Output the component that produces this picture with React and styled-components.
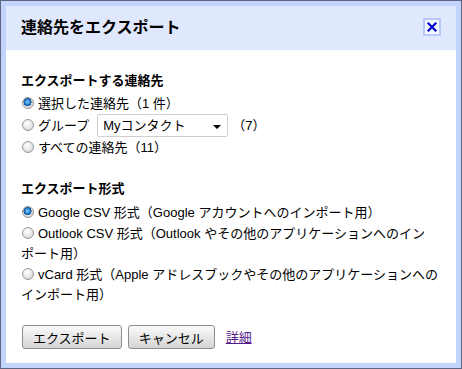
import React from 'react'
import styled, { createGlobalStyle } from 'styled-components'

const Global = createGlobalStyle`
    html, body {
        margin: 0;
        padding: 0;
        background: #ffffff;
    }
    body {
        font-family: "Liberation Sans", "Noto Sans CJK JP", sans-serif;
        color: #000;
    }
`;

const exportTargets = [
    { id: 'selected', label: '選択した連絡先（1 件）', checked: true },
    { id: 'group', label: 'グループ', group: true },
    { id: 'all', label: 'すべての連絡先（11）' },
]

const formats = [
    { id: 'google', lines: ['Google CSV 形式（Google アカウントへのインポート用）'], checked: true },
    { id: 'outlook', lines: ['Outlook CSV 形式（Outlook やその他のアプリケーションへのイン', 'ポート用）'] },
    { id: 'vcard', lines: ['vCard 形式（Apple アドレスブックやその他のアプリケーションへの', 'インポート用）'] },
]

const App = () => {
    return (
        <>
            <Global />
            <Frame>
                <Dialog>
                    <Header>
                        <Title>連絡先をエクスポート</Title>
                        <Close aria-label="閉じる">
                            <svg width="10" height="10" viewBox="0 0 10 10">
                                <path d="M1.5 1.5 L8.5 8.5 M8.5 1.5 L1.5 8.5" stroke="#0000cc" strokeWidth="2.2" strokeLinecap="square" />
                            </svg>
                        </Close>
                    </Header>
                    <Body>
                        <Section>
                            <Heading>エクスポートする連絡先</Heading>
                            {exportTargets.map(t => (
                                <Row key={t.id} $tall={t.group}>
                                    <Radio type="radio" name="target" defaultChecked={t.checked} />
                                    {t.label}
                                    {t.group && (
                                        <>
                                            <Select>
                                                <span>Myコンタクト</span>
                                                <Arrow />
                                            </Select>
                                            <Count>（7）</Count>
                                        </>
                                    )}
                                </Row>
                            ))}
                        </Section>

                        <Section>
                            <Heading $gap={4}>エクスポート形式</Heading>
                            {formats.map(f => (
                                <FormatRow key={f.id}>
                                    <Radio type="radio" name="format" defaultChecked={f.checked} />
                                    {f.lines.map((line, i) => (
                                        <React.Fragment key={i}>
                                            {i > 0 && <br />}
                                            <Line>{line}</Line>
                                        </React.Fragment>
                                    ))}
                                </FormatRow>
                            ))}
                        </Section>

                        <Actions>
                            <Button>エクスポート</Button>
                            <Button>キャンセル</Button>
                            <Link href="#">詳細</Link>
                        </Actions>
                    </Body>
                </Dialog>
            </Frame>
        </>
    )
}

export default App

const Frame = styled.div`
    width: 462px;
    height: 369px;
    box-sizing: border-box;
    border: 1px solid #5d6783;
    background: #c3d4fc;
    padding: 5px;
`;

const Dialog = styled.div`
    height: 100%;
    display: flex;
    flex-direction: column;
    background: #ffffff;
`;

const Header = styled.div`
    height: 44px;
    flex: none;
    display: flex;
    align-items: center;
    justify-content: space-between;
    padding: 0 15px;
    background: #e0e8fe;
`;

const Title = styled.h1`
    margin: 0;
    font-size: 16px;
    font-weight: bold;
    line-height: 20px;
    padding-bottom: 1px;
`;

const Close = styled.button`
    width: 18px;
    height: 18px;
    box-sizing: border-box;
    margin-top: -3px;
    padding: 0;
    border: 2px solid #b7caf9;
    background: #f4f7ff;
    display: flex;
    align-items: center;
    justify-content: center;
`;

const Body = styled.div`
    flex: 1;
    padding: 20px 15px 0 15px;
    font-size: 13px;
    line-height: 21px;
`;

const Section = styled.div`
    margin-bottom: 20px;

    &:last-of-type {
        margin-bottom: 17px;
    }
`;

const Heading = styled.h2`
    margin: 0 0 ${p => p.$gap ?? 2}px;
    font-size: 13px;
    font-weight: bold;
    line-height: 21px;
`;

const Row = styled.div`
    height: ${p => (p.$tall ? '23px' : '21px')};
    line-height: ${p => (p.$tall ? '23px' : '21px')};
    white-space: nowrap;
`;

const FormatRow = styled.div`
    line-height: 20px;
    margin-bottom: 1px;
`;

const Line = styled.span`
    white-space: nowrap;
`;

const Radio = styled.input`
    appearance: none;
    -webkit-appearance: none;
    width: 12px;
    height: 12px;
    margin: 0 4px 0 1px;
    vertical-align: -1px;
    border-radius: 50%;
    border: 1px solid #9a9a9a;
    background: radial-gradient(circle at 40% 35%, #ffffff 0%, #e6e6e6 55%, #c8c8c8 100%);
    box-sizing: border-box;

    &:checked {
        background:
            radial-gradient(circle at 45% 40%, #8fd0ff 0%, #2a86d8 30%, #114f95 48%, transparent 52%),
            radial-gradient(circle at 40% 35%, #ffffff 0%, #e6e6e6 55%, #c8c8c8 100%);
    }
`;

const Select = styled.span`
    display: inline-flex;
    align-items: center;
    justify-content: space-between;
    box-sizing: border-box;
    width: 131px;
    height: 23px;
    margin-left: 8px;
    padding: 0 6px 0 5px;
    border: 1px solid #cfcfcf;
    border-radius: 2px;
    background: #fff;
    vertical-align: top;
    line-height: 21px;
`;

const Arrow = styled.span`
    width: 0;
    height: 0;
    border-left: 4px solid transparent;
    border-right: 4px solid transparent;
    border-top: 4px solid #000;
    margin-top: 2px;
`;

const Count = styled.span`
    margin-left: 4px;
`;

const Actions = styled.div`
    display: flex;
    align-items: center;
    gap: 6px;
    padding-left: 1px;
`;

const Button = styled.button`
    height: 24px;
    box-sizing: border-box;
    padding: 0 10px;
    border: 1px solid #8e8e8e;
    border-radius: 3px;
    background: linear-gradient(#fafafa, #e4e4e4 60%, #d4d4d4);
    font-family: "Liberation Sans", "Noto Sans CJK JP", sans-serif;
    font-size: 13px;
    color: #000;
`;

const Link = styled.a`
    margin-left: 5px;
    color: #551a8b;
    text-decoration: underline;
    font-size: 13px;
`;
